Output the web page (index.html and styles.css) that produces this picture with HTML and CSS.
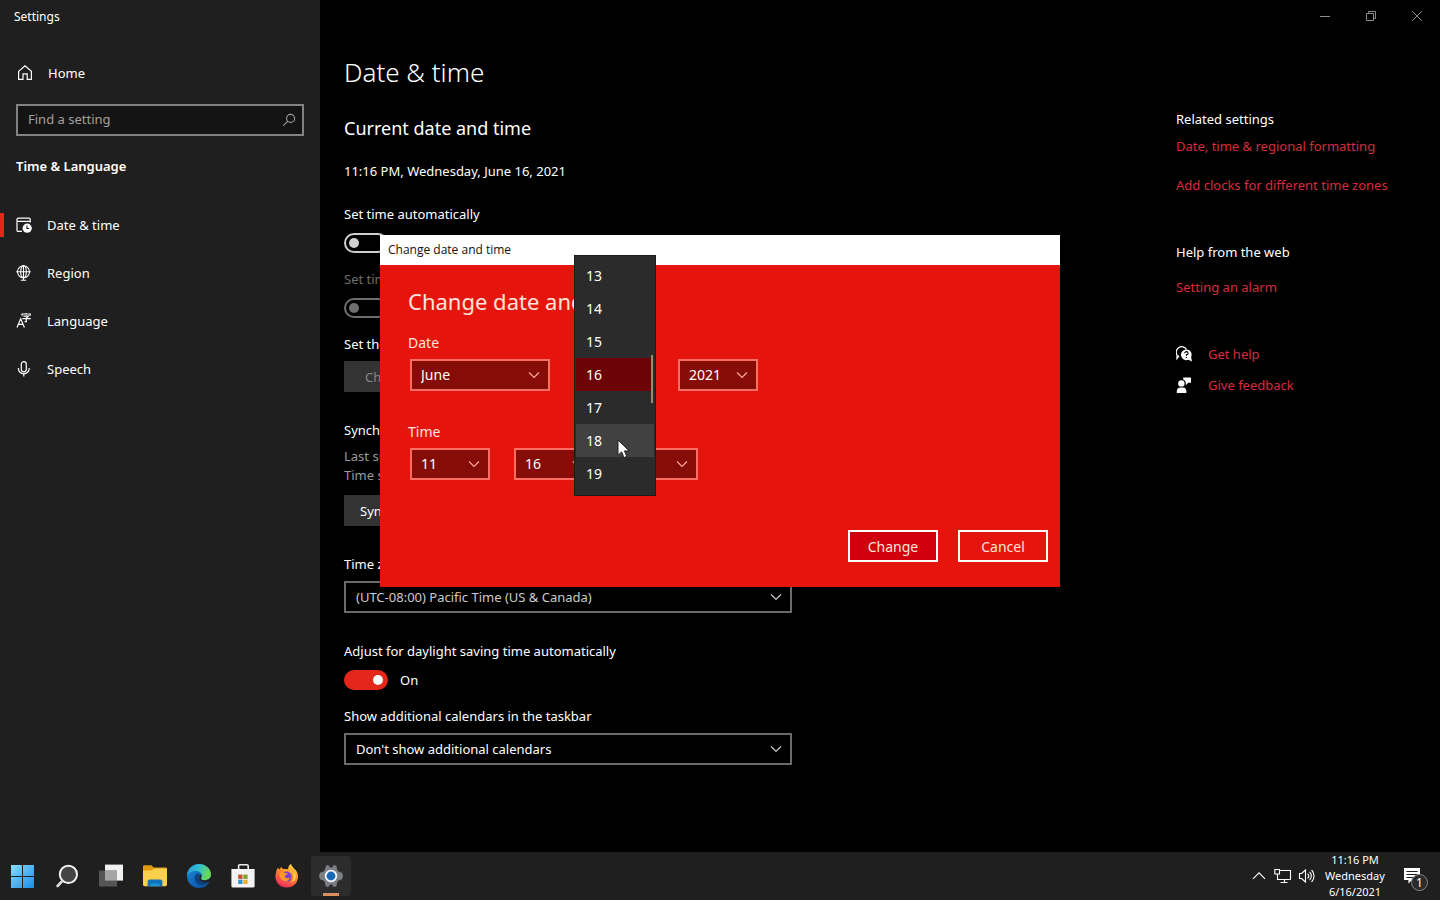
FILE: index.html
```html
<!DOCTYPE html>
<html lang="en">
<head>
    <meta charset="UTF-8">
    <meta name="viewport" content="width=device-width, initial-scale=1.0">
    <title>Settings</title>
    <link rel="stylesheet" href="styles.css">
</head>
<body>
    <!-- Shared symbols -->
    <svg class="symbols" aria-hidden="true">
        <symbol id="chevron" viewBox="0 0 12 12">
            <path d="M1 3.5 L6 8.5 L11 3.5" fill="none" stroke="currentColor" stroke-width="1.2"/>
        </symbol>
    </svg>

    <div class="window">
        <aside class="sidebar">
            <div class="app-title">Settings</div>

            <a class="nav-item home" href="#">
                <svg width="16" height="16" viewBox="0 0 16 16" fill="none" stroke="currentColor" stroke-width="1.2">
                    <path d="M1.6 6.4 L8 0.9 L14.4 6.4 V14.4 H10.2 V8.9 H6 V14.4 H1.6 Z"/>
                </svg>
                <span>Home</span>
            </a>

            <div class="search">
                <input type="text" placeholder="Find a setting" aria-label="Find a setting">
                <svg width="14" height="14" viewBox="0 0 14 14" fill="none" stroke="currentColor" stroke-width="1.1">
                    <circle cx="8.6" cy="5.4" r="4"/>
                    <path d="M5.8 8.2 L1.4 12.6"/>
                </svg>
            </div>

            <h2 class="group-title">Time &amp; Language</h2>

            <nav>
                <a class="nav-item active" href="#">
                    <svg width="16" height="16" viewBox="0 0 16 16">
                        <path d="M6 14.4 H2.2 A1.2 1.2 0 0 1 1 13.2 V2.4 A1.2 1.2 0 0 1 2.2 1.2 H13 A1.2 1.2 0 0 1 14.2 2.4 V5.6 M1 4.4 H14.2" fill="none" stroke="currentColor" stroke-width="1.2"/>
                        <circle cx="11.2" cy="11.2" r="4.6" fill="currentColor"/>
                        <path d="M11 8.6 V11.5 H13.2" fill="none" stroke="#1f1f1f" stroke-width="1.1"/>
                    </svg>
                    <span>Date &amp; time</span>
                </a>
                <a class="nav-item" href="#">
                    <svg width="16" height="16" viewBox="0 0 16 16" fill="none" stroke="currentColor" stroke-width="1.1">
                        <circle cx="7.5" cy="6.8" r="6"/>
                        <ellipse cx="7.5" cy="6.8" rx="2.8" ry="6"/>
                        <path d="M0.2 6.8 H14.8 M7.5 0 V15 M4.8 15.2 H10.2"/>
                    </svg>
                    <span>Region</span>
                </a>
                <a class="nav-item" href="#">
                    <svg width="16" height="16" viewBox="0 0 16 16" fill="none" stroke="currentColor" stroke-width="1.2">
                        <path d="M1 14.4 L4.7 5.8 L8.4 14.4 M2.3 11.4 H7.1"/>
                        <path d="M6 2.8 V1 H14.2 V2.8 M10 0 V1 M7.4 3.2 H12.4 L10.3 5 V8.6 H8.6 M6.4 5.6 H14.8"/>
                    </svg>
                    <span>Language</span>
                </a>
                <a class="nav-item" href="#">
                    <svg width="16" height="16" viewBox="0 0 16 16" fill="none" stroke="currentColor" stroke-width="1.2">
                        <rect x="5.3" y="0.6" width="5" height="10.2" rx="2.5"/>
                        <path d="M2.4 7 V7.6 A5.4 5.2 0 0 0 13.2 7.6 V7 M7.8 12.8 V15.6"/>
                    </svg>
                    <span>Speech</span>
                </a>
            </nav>
        </aside>

        <main class="main">
            <header class="caption-buttons">
                <button type="button" aria-label="Minimize">
                    <svg width="12" height="12" viewBox="0 0 12 12"><path d="M1 6.5 H11"/></svg>
                </button>
                <button type="button" aria-label="Restore">
                    <svg width="12" height="12" viewBox="0 0 12 12"><path d="M1.5 3.5 H8.5 V10.5 H1.5 Z M3.5 3.5 V1.5 H10.5 V8.5 H8.5"/></svg>
                </button>
                <button type="button" aria-label="Close">
                    <svg width="12" height="12" viewBox="0 0 12 12"><path d="M1 1 L11 11 M11 1 L1 11"/></svg>
                </button>
            </header>

            <div class="columns">
                <section class="settings">
                    <h1>Date &amp; time</h1>
                    <h2>Current date and time</h2>
                    <p class="now">11:16 PM, Wednesday, June 16, 2021</p>

                    <div class="field">
                        <label for="auto-time">Set time automatically</label>
                        <div class="toggle-row"><input class="toggle" type="checkbox" id="auto-time"></div>
                    </div>
                    <div class="field disabled">
                        <label for="auto-zone">Set time zone automatically</label>
                        <div class="toggle-row"><input class="toggle" type="checkbox" id="auto-zone" disabled></div>
                    </div>
                    <div class="field block">
                        <h3>Set the date and time manually</h3>
                        <button class="btn btn-disabled" type="button" disabled>Change</button>
                    </div>
                    <div class="field block">
                        <h3>Synchronize your clock</h3>
                        <p class="hint">Last successful time synchronization: 6/16/2021<br>Time server: time.windows.com</p>
                        <button class="btn" type="button">Sync now</button>
                    </div>
                    <div class="field block">
                        <label for="zone">Time zone</label>
                        <div class="select wide dim">
                            <select id="zone"><option>(UTC-08:00) Pacific Time (US &amp; Canada)</option></select>
                            <svg><use href="#chevron"/></svg>
                        </div>
                    </div>
                    <div class="field">
                        <label for="dst">Adjust for daylight saving time automatically</label>
                        <div class="toggle-row"><input class="toggle" type="checkbox" id="dst" checked><span>On</span></div>
                    </div>
                    <div class="field block">
                        <label for="calendars">Show additional calendars in the taskbar</label>
                        <div class="select wide">
                            <select id="calendars"><option>Don't show additional calendars</option></select>
                            <svg><use href="#chevron"/></svg>
                        </div>
                    </div>
                </section>

                <aside class="related">
                    <h3>Related settings</h3>
                    <ul class="related-links">
                        <li><a href="#">Date, time &amp; regional formatting</a></li>
                        <li><a href="#">Add clocks for different time zones</a></li>
                    </ul>
                    <h3>Help from the web</h3>
                    <ul class="web-links">
                        <li><a href="#">Setting an alarm</a></li>
                    </ul>
                    <ul class="support-links">
                        <li>
                            <svg width="16" height="16" viewBox="0 0 16 16">
                                <path d="M3 9.6 L1 12.4 V9 A5 5 0 1 1 10.4 3.4" fill="none" stroke="#fff" stroke-width="1.3"/>
                                <path d="M10.3 3.4 A5.3 5.3 0 0 1 15.1 11 L16 15.6 L12.4 13.8 A5.4 5.4 0 1 1 10.3 3.4 Z" fill="#fff"/>
                                <path d="M8.7 7.2 A1.7 1.6 0 1 1 10.4 8.8 V10 M10.4 11 V12.1" fill="none" stroke="#000" stroke-width="1.1"/>
                            </svg>
                            <a href="#">Get help</a>
                        </li>
                        <li>
                            <svg width="16" height="16" viewBox="0 0 16 16" fill="#fff">
                                <circle cx="5.4" cy="6.4" r="3.2"/>
                                <path d="M0.8 16 V14.4 A3.8 3.8 0 0 1 4.6 10.6 H6.8 A3.8 3.8 0 0 1 10.4 14.4 V16 Z"/>
                                <path d="M7.2 0.4 H15 V5.8 H12.2 L9.8 8.2 V5.4 A4.4 4.4 0 0 0 7.2 2.6 Z"/>
                            </svg>
                            <a href="#">Give feedback</a>
                        </li>
                    </ul>
                </aside>
            </div>
        </main>
    </div>

    <!-- Change date and time dialog -->
    <div class="dialog" role="dialog" aria-labelledby="dialog-title">
        <div class="dialog-caption">Change date and time</div>
        <form class="dialog-body">
            <h2 id="dialog-title">Change date and time</h2>

            <h3>Date</h3>
            <div class="pickers">
                <div class="select month">
                    <select aria-label="Month"><option>June</option></select>
                    <svg><use href="#chevron"/></svg>
                </div>
                <div class="select day">
                    <select aria-label="Day"><option>16</option></select>
                    <svg><use href="#chevron"/></svg>
                    <ul class="day-list" role="listbox" aria-label="Day">
                        <li role="option">13</li>
                        <li role="option">14</li>
                        <li role="option">15</li>
                        <li role="option" class="selected" aria-selected="true">16</li>
                        <li role="option">17</li>
                        <li role="option" class="hover">18</li>
                        <li role="option">19</li>
                    </ul>
                </div>
                <div class="select">
                    <select aria-label="Year"><option>2021</option></select>
                    <svg><use href="#chevron"/></svg>
                </div>
            </div>

            <h3>Time</h3>
            <div class="pickers">
                <div class="select">
                    <select aria-label="Hour"><option>11</option></select>
                    <svg><use href="#chevron"/></svg>
                </div>
                <div class="select">
                    <select aria-label="Minute"><option>16</option></select>
                    <svg><use href="#chevron"/></svg>
                </div>
                <div class="select">
                    <select aria-label="AM or PM"><option>PM</option></select>
                    <svg><use href="#chevron"/></svg>
                </div>
            </div>

            <div class="actions">
                <button type="button" class="primary">Change</button>
                <button type="button">Cancel</button>
            </div>
        </form>

        <svg class="cursor" width="14" height="20" viewBox="0 0 14 20">
            <path d="M1 1 V16.2 L4.6 12.9 L7 18.6 L9.8 17.4 L7.4 11.9 H12.2 Z" fill="#fff" stroke="#222" stroke-width="1"/>
        </svg>
    </div>

    <footer class="taskbar">
        <div class="apps">
            <button type="button" aria-label="Start">
                <svg width="24" height="24" viewBox="0 0 24 24">
                    <defs>
                        <linearGradient id="start" x1="0" y1="0" x2="1" y2="1">
                            <stop offset="0" stop-color="#8adcfb"/>
                            <stop offset="1" stop-color="#1a8ce8"/>
                        </linearGradient>
                    </defs>
                    <path d="M0 1 H11 V12 H0 Z M12 1 H23 V12 H12 Z M0 13 H11 V24 H0 Z M12 13 H23 V24 H12 Z" fill="url(#start)"/>
                </svg>
            </button>
            <button type="button" aria-label="Search">
                <svg width="24" height="24" viewBox="0 0 24 24">
                    <circle cx="13.4" cy="10.4" r="8.6" fill="#444" stroke="#f0f0f0" stroke-width="2"/>
                    <path d="M7.4 16.8 L2.6 22" stroke="#ddd" stroke-width="2.6" stroke-linecap="round"/>
                </svg>
            </button>
            <button type="button" aria-label="Task view">
                <svg width="24" height="24" viewBox="0 0 24 24">
                    <rect x="6" y="0.6" width="18" height="16" fill="#f2f2f2"/>
                    <rect x="0" y="6.6" width="18" height="16" fill="#555"/>
                    <rect x="6" y="6.6" width="12" height="10" fill="#a5a5a5"/>
                </svg>
            </button>
            <button type="button" aria-label="File Explorer">
                <svg width="24" height="24" viewBox="0 0 24 24">
                    <path d="M0 2.6 A1.4 1.4 0 0 1 1.4 1.2 H8.4 L10.8 3.4 H22.6 A1.4 1.4 0 0 1 24 4.8 V10 H0 Z" fill="#e09b13"/>
                    <path d="M0 6.6 H8.4 L10.8 4.4 H24 V20.6 A1.6 1.6 0 0 1 22.4 22.2 H1.6 A1.6 1.6 0 0 1 0 20.6 Z" fill="#fcd04b"/>
                    <path d="M4.6 22.2 V17.4 A2 2 0 0 1 6.6 15.4 H17.4 A2 2 0 0 1 19.4 17.4 V22.2 Z" fill="#0f72bd"/>
                    <path d="M7.4 22.2 V20.6 A1 1 0 0 1 8.4 19.6 H15.6 A1 1 0 0 1 16.6 20.6 V22.2 Z" fill="#1c93d9"/>
                </svg>
            </button>
            <button type="button" aria-label="Edge">
                <svg width="24" height="24" viewBox="0 0 24 24">
                    <defs>
                        <linearGradient id="edge-top" x1="0" y1="0" x2="1" y2="0.3">
                            <stop offset="0" stop-color="#2794dc"/>
                            <stop offset="0.5" stop-color="#31bfd0"/>
                            <stop offset="1" stop-color="#68d957"/>
                        </linearGradient>
                        <linearGradient id="edge-base" x1="0" y1="0" x2="0.6" y2="1">
                            <stop offset="0" stop-color="#1a8fdf"/>
                            <stop offset="1" stop-color="#0c54a5"/>
                        </linearGradient>
                    </defs>
                    <circle cx="12" cy="12" r="12" fill="url(#edge-base)"/>
                    <path d="M0.3 9.6 C1.6 4 6.4 0 12 0 C19 0 24 5 24 10.6 C24 14.2 21.4 16.2 18.2 16.2 C15.4 16.2 14 15.2 14 14.2 C14 13.6 15 13.2 15 11.4 C15 9 12.4 7 9 7 C5 7 1.6 8.4 0.3 12 Z" fill="url(#edge-top)"/>
                    <path d="M8.8 10.4 C6 14 8.4 20.6 14.6 21 C18 21.2 20.6 19.8 22.4 17.8 C20 18.8 14.6 18.8 12.2 15.6 C10.8 13.8 11.2 11.2 12.6 9.8 C11.4 9.4 9.8 9.4 8.8 10.4 Z" fill="#0c3f80"/>
                    <path d="M14 14.4 C14 15.8 16 16.6 18.2 16.2 C21 16 23 15 23.8 12.6 L24.4 17 L22.2 18 C19 19 14.6 18.6 12.6 16 C11.6 14.4 11.8 12 13 10.6 C15.4 11 14 13.4 14 14.4 Z" fill="#202020"/>
                </svg>
            </button>
            <button type="button" aria-label="Microsoft Store">
                <svg width="24" height="24" viewBox="0 0 24 24">
                    <path d="M7.6 5.4 V2 A1.2 1.2 0 0 1 8.8 0.8 H16 A1.2 1.2 0 0 1 17.2 2 V5.4" fill="none" stroke="#eee" stroke-width="1.6"/>
                    <path d="M0.4 5 H23.6 V22 A1.6 1.6 0 0 1 22 23.6 H2 A1.6 1.6 0 0 1 0.4 22 Z" fill="#f3f3f3"/>
                    <rect x="7.2" y="10.6" width="4.3" height="4.3" fill="#c4502c"/>
                    <rect x="12.3" y="10.6" width="4.3" height="4.3" fill="#7da52c"/>
                    <rect x="7.2" y="15.7" width="4.3" height="4.3" fill="#2b93cf"/>
                    <rect x="12.3" y="15.7" width="4.3" height="4.3" fill="#eead2b"/>
                </svg>
            </button>
            <button type="button" aria-label="Firefox">
                <svg width="24" height="24" viewBox="0 0 24 24">
                    <defs>
                        <linearGradient id="fox" x1="0.8" y1="0" x2="0.3" y2="1">
                            <stop offset="0" stop-color="#ffe34a"/>
                            <stop offset="0.45" stop-color="#ff8a2a"/>
                            <stop offset="1" stop-color="#f0265f"/>
                        </linearGradient>
                    </defs>
                    <path d="M3 3.4 C3.4 4.6 3.8 5 4.4 5.4 L6.4 2.8 C6.6 4 7.4 4.8 8.6 5 C10.6 4.8 12 4.8 13.2 5.4 C13 3 14.2 1 16 0 C16.4 3 21 5 22.4 9 C25 17 19 23.6 12 23.6 C4 23.6 -1 17 0.8 9.6 C1 7 2 5 3 3.4 Z" fill="url(#fox)"/>
                    <circle cx="11.6" cy="12.6" r="5" fill="#7b41d2"/>
                    <path d="M4.8 8.6 C7 7.4 9 8.6 10.4 9.2 H13 C12.4 10.8 10.4 10.8 9.8 12 C9.6 14.6 12.6 14.6 14.6 13.4 C14 17 10.6 18 8 16.6 C5.4 15 4.4 11.4 4.8 8.6 Z" fill="#ff9a26"/>
                    <path d="M16.8 7.6 C19.6 11 19 16.6 15.4 18.4 C19.8 18 22.2 13.6 20.6 9.8 C19.4 9.6 18 8.6 16.8 7.6 Z" fill="#ffcf3a"/>
                </svg>
            </button>
            <button type="button" class="running" aria-label="Settings">
                <svg width="24" height="24" viewBox="0 0 24 24">
                    <path d="M7 1.6 L9.4 1 L11 3.4 H13 L14.6 1 L17.4 1.8 L18 5.6 L19.4 7.6 L23 8.8 L24 12 L23 15.2 L19.4 16.4 L18 18.4 L17.4 22.2 L14.6 23 L13 20.6 H11 L9.4 23 L6.6 22.2 L6 18.4 L4.6 16.4 L1 15.2 L0 12 L1 8.8 L4.6 7.6 L6 5.6 Z" fill="#7c8085"/>
                    <circle cx="12" cy="12" r="6.2" fill="#f2f4f6"/>
                    <circle cx="12" cy="12" r="4.4" fill="#1769b5"/>
                </svg>
            </button>
        </div>

        <div class="tray">
            <svg class="overflow" width="14" height="16" viewBox="0 0 14 16"><path d="M1 10.8 L7 4.8 L13 10.8"/></svg>
            <svg width="18" height="16" viewBox="0 0 18 16"><path d="M5.5 2.5 H16.5 V11.5 H3.5 V7 M0.8 1.5 H5.5 V6 H0.8 Z M3.5 6 V11.5 M10.5 11.5 V14.5 M6.5 14.5 H13.5"/></svg>
            <svg width="18" height="16" viewBox="0 0 18 16"><path d="M1.5 5.5 H3.6 L7.5 2 V14 L3.6 10.5 H1.5 Z M9.6 5.6 A3.4 3.4 0 0 1 9.6 10.4 M11.6 3.8 A6 6 0 0 1 11.6 12.2 M13.6 2 A8.6 8.6 0 0 1 13.6 14"/></svg>
            <div class="clock">11:16 PM<br>Wednesday<br>6/16/2021</div>
            <button type="button" class="notifications" aria-label="Notifications">
                <svg width="18" height="18" viewBox="0 0 18 18">
                    <path d="M1 1 H17 V13 H9 L5.4 16.4 V13 H1 Z" fill="#fff" stroke="none"/>
                    <path d="M3.4 4.5 H14.6 M3.4 7.5 H14.6 M3.4 10.5 H10" stroke="#1f1f1f"/>
                </svg>
                <span class="badge">1</span>
            </button>
        </div>
    </footer>
</body>
</html>
```
FILE: styles.css
```css
* {
    box-sizing: border-box;
}

body {
    font-family: 'Segoe UI', 'Noto Sans', sans-serif;
    font-size: 13px;
    line-height: 20px;
    margin: 0;
    min-height: 100vh;
    display: flex;
    flex-direction: column;
    background-color: #000;
    color: #fff;
}

h1, h2, h3, p, ul {
    margin: 0;
    padding: 0;
    font-weight: 400;
}

h3 {
    font-size: 13px;
}

ul {
    list-style: none;
}

a {
    text-decoration: none;
}

button, input, select {
    font: inherit;
    color: inherit;
    margin: 0;
}

.symbols {
    display: none;
}

.window {
    flex: 1;
    display: flex;
}

/* Sidebar */
.sidebar {
    width: 320px;
    background-color: #1f1f1f;
}

.app-title {
    padding: 7px 14px 0;
    height: 49px;
    font-size: 12px;
}

.nav-item {
    display: flex;
    align-items: center;
    gap: 15px;
    height: 48px;
    padding: 0 16px;
    color: #fff;
}

.nav-item.home {
    padding-left: 17px;
}

.nav-item.active {
    background: linear-gradient(#e5261b, #e5261b) no-repeat left center / 4px 24px;
}

.search {
    display: flex;
    align-items: center;
    height: 32px;
    margin: 7px 16px 20px;
    padding-right: 6px;
    border: 2px solid #828282;
    background-color: #141414;
    color: #a0a0a0;
}

.search input {
    flex: 1;
    min-width: 0;
    padding: 0 10px 2px;
    border: none;
    outline: none;
    background: none;
}

.search input::placeholder {
    color: #a0a0a0;
}

.group-title {
    margin: 0 16px 25px;
    font-size: 13px;
    font-weight: 600;
}

/* Main area */
.main {
    flex: 1;
    display: flex;
    flex-direction: column;
}

.caption-buttons {
    display: flex;
    justify-content: flex-end;
    height: 32px;
}

.caption-buttons button {
    width: 46px;
    padding: 0;
    border: none;
    background: none;
}

.caption-buttons svg {
    display: block;
    margin: 0 auto;
    fill: none;
    stroke: #8c8c8c;
}

.columns {
    flex: 1;
    display: flex;
    justify-content: space-between;
    padding: 22px 0 24px 24px;
}

.settings {
    width: 448px;
}

.settings h1 {
    margin-bottom: 26px;
    font-size: 26px;
    font-weight: 300;
    line-height: 36px;
}

.settings h2 {
    margin-bottom: 21px;
    font-size: 18px;
    line-height: 24px;
}

.now {
    margin-bottom: 23px;
}

.field {
    margin-bottom: 16px;
}

.field.block {
    margin-bottom: 28px;
}

.field label, .field h3 {
    display: block;
    margin-bottom: 9px;
}

.field.block label, .field.block h3 {
    margin-bottom: 7px;
}

.disabled {
    color: #6e6e6e;
}

.hint {
    margin-bottom: 10px;
    line-height: 19px;
    color: #9a9a9a;
}

.toggle-row {
    display: flex;
    align-items: center;
    gap: 12px;
}

.toggle {
    appearance: none;
    display: flex;
    align-items: center;
    width: 44px;
    height: 20px;
    padding: 0 3px;
    border: 2px solid #d0d0d0;
    border-radius: 10px;
}

.toggle::before {
    content: '';
    width: 10px;
    height: 10px;
    border-radius: 50%;
    background-color: #d0d0d0;
}

.toggle:disabled {
    border-color: #6e6e6e;
}

.toggle:disabled::before {
    background-color: #6e6e6e;
}

.toggle:checked {
    justify-content: flex-end;
    border-color: #e5261b;
    background-color: #e5261b;
}

.toggle:checked::before {
    background-color: #fff;
}

.btn {
    height: 31px;
    padding: 0 16px;
    border: none;
    background-color: #333;
}

.btn-disabled {
    padding: 0 21px;
    color: #858585;
}

/* Drop-downs: the chevron shares the grid cell with the select */
.select {
    display: grid;
    align-items: center;
    width: 80px;
    height: 32px;
}

.select > select, .select > svg {
    grid-area: 1 / 1;
}

.select > select {
    appearance: none;
    width: 100%;
    height: 32px;
    padding: 0 10px;
    border: 2px solid #6b6b6b;
    border-radius: 0;
    background-color: #000;
}

.select > svg {
    justify-self: end;
    width: 12px;
    height: 12px;
    margin-right: 10px;
    color: #ccc;
    pointer-events: none;
}

.select.wide {
    width: 100%;
}

.select.dim {
    color: #ccc;
}

/* Related links */
.related {
    width: 264px;
    padding-top: 55px;
}

.related a {
    color: #d92b3c;
}

.related-links {
    margin: 7px 0 47px;
}

.related-links li + li {
    margin-top: 19px;
}

.web-links {
    margin: 15px 0 47px;
}

.support-links li {
    display: flex;
    align-items: center;
    gap: 16px;
    margin-bottom: 11px;
}

/* Dialog */
.dialog {
    position: absolute;
    top: 235px;
    left: 50%;
    width: 680px;
    margin-left: -340px;
    background-color: #e5140c;
    color: #fde4dc;
}

.dialog-caption {
    height: 30px;
    padding: 5px 8px;
    background-color: #fff;
    color: #111;
    font-family: 'Segoe UI', 'Open Sans', sans-serif;
    font-size: 12px;
}

.dialog-body {
    padding: 20px 12px 25px 28px;
    font-size: 14px;
}

.dialog-body h2 {
    margin-bottom: 16px;
    font-size: 22px;
    line-height: 32px;
}

.dialog-body h3 {
    margin-bottom: 6px;
    font-size: 14px;
}

.pickers {
    display: flex;
    gap: 24px;
    margin: 0 2px 31px;
}

.dialog .select > select {
    padding: 0 9px;
    border-color: #fa6f63;
    background-color: #850c07;
    color: #fff;
}

.dialog .select > svg {
    color: #fda79d;
}

.dialog .month {
    width: 140px;
}

.dialog .day {
    position: relative;
}

.day-list {
    position: absolute;
    top: -104px;
    left: 0;
    width: 82px;
    height: 241px;
    padding: 3px 1px;
    border: 1px solid #1c1c1c;
    background: linear-gradient(#9a8a66, #9a8a66) no-repeat 76px 99px / 2px 48px #2b2b2b;
    color: #fff;
}

.day-list li {
    height: 33px;
    padding: 0 10px;
    line-height: 33px;
}

.day-list .selected {
    margin-right: 3px;
    background-color: #6c0306;
}

.day-list .hover {
    background-color: #414141;
}

.actions {
    display: flex;
    justify-content: flex-end;
    gap: 20px;
    padding-top: 19px;
}

.actions button {
    width: 90px;
    height: 32px;
    padding: 1px 0 0;
    border: 2px solid #fff;
    background: none;
}

.actions .primary {
    background-color: #d2000f;
}

.cursor {
    position: absolute;
    top: 204px;
    left: 237px;
}

/* Taskbar */
.taskbar {
    display: flex;
    justify-content: space-between;
    height: 48px;
    background-color: #1f1f1f;
}

.apps {
    display: flex;
    align-items: center;
    gap: 4px;
    padding-left: 3px;
}

.apps button {
    display: flex;
    align-items: center;
    justify-content: center;
    width: 40px;
    height: 40px;
    padding: 0;
    border: none;
    border-radius: 4px;
    background: none;
}

.apps .running {
    background: linear-gradient(#d9915f, #d9915f) no-repeat center bottom / 16px 3px #2c2c2c;
}

.tray {
    display: flex;
    align-items: center;
    gap: 6px;
    padding-right: 19px;
}

.tray svg {
    fill: none;
    stroke: #fff;
    stroke-width: 1.1;
}

.tray .overflow {
    margin-right: 2px;
}

.clock {
    width: 66px;
    font-size: 11px;
    line-height: 16px;
    text-align: center;
}

.notifications {
    position: relative;
    display: flex;
    width: 18px;
    margin-left: 9px;
    padding: 0;
    border: none;
    background: none;
}

.badge {
    position: absolute;
    top: 7px;
    left: 8px;
    width: 17px;
    height: 17px;
    border: 1px solid #888;
    border-radius: 50%;
    background-color: #2b2b2b;
    font-size: 12px;
    line-height: 15px;
}
```
